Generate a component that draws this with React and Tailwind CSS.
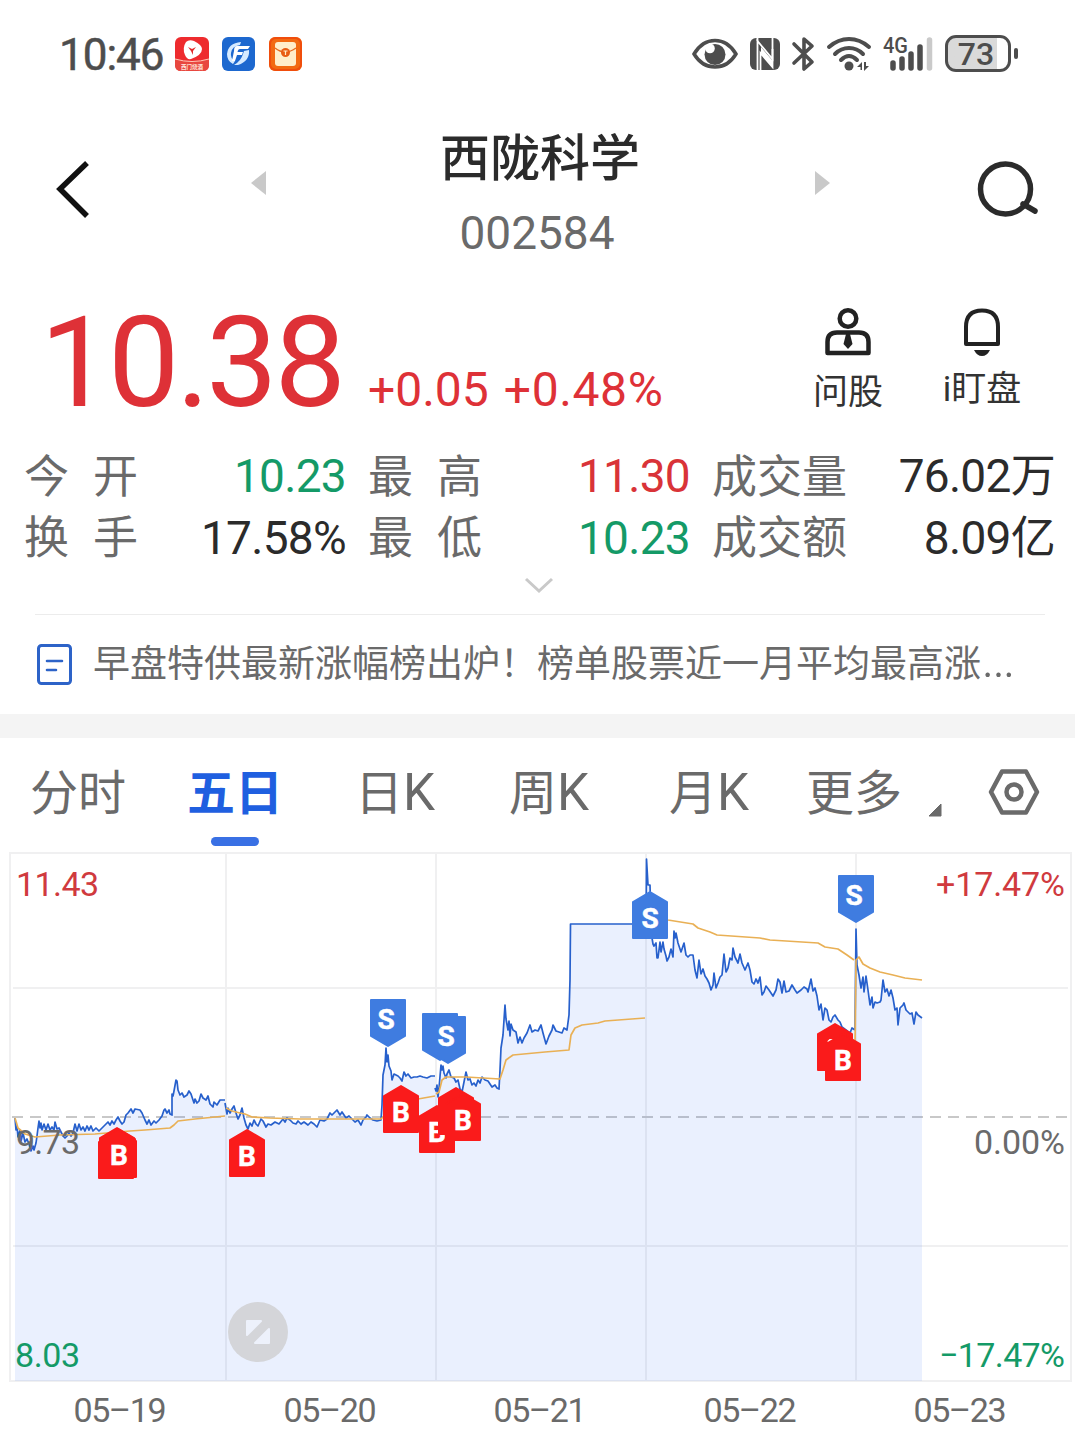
import React from 'react';
import clsx from 'clsx';

const stats = [
  { label: '今开', value: '10.23', color: 'text-[#149a67]' },
  { label: '最高', value: '11.30', color: 'text-[#d93338]' },
  { label: '成交量', value: '76.02', unit: '万', color: 'text-[#2b2b2b]' },
  { label: '换手', value: '17.58%', color: 'text-[#2b2b2b]' },
  { label: '最低', value: '10.23', color: 'text-[#149a67]' },
  { label: '成交额', value: '8.09', unit: '亿', color: 'text-[#2b2b2b]' },
];

const tabs = [
  { name: '分时', width: 'w-[157px]' },
  { name: '五日', width: 'w-[168px]', active: true },
  { name: '日K', width: 'w-[154px]' },
  { name: '周K', width: 'w-[160px]' },
  { name: '月K', width: 'w-[137px]' },
  { name: '更多', width: 'w-[122px]' },
];

// One entry per trading day
const priceDays = [
  '15,1118 16,1130 17,1126 18,1137 20,1130 21,1141 23,1133 25,1142 27,1139 29,1144 31,1151 33,1146 34,1150 36,1143 37,1136 38,1128 39,1121 40,1128 41,1123 42,1130 44,1124 46,1130 48,1124 50,1130 52,1127 54,1130 55,1122 57,1129 59,1128 61,1132 63,1136 65,1138 67,1136 69,1133 71,1136 73,1133 75,1124 77,1131 79,1124 81,1130 83,1127 85,1131 87,1126 89,1130 91,1126 93,1131 96,1128 99,1131 102,1128 105,1125 108,1122 110,1125 112,1121 114,1124 116,1120 118,1117 120,1121 122,1124 124,1122 126,1115 128,1113 131,1109 133,1113 135,1109 140,1110 142,1113 145,1120 147,1124 149,1120 151,1125 154,1121 156,1123 159,1120 162,1116 164,1110 165,1109 167,1113 169,1110 170,1114 172,1115 172,1094 173,1096 174,1091 176,1080 177,1081 178,1090 180,1095 182,1093 184,1097 187,1095 189,1091 191,1094 194,1103 195,1099 197,1103 199,1101 201,1094 203,1098 206,1100 208,1096 210,1104 213,1107 214,1102 217,1105 220,1100 225,1100',
  '225,1103 227,1114 228,1108 230,1113 232,1109 234,1106 236,1113 238,1119 240,1115 242,1108 244,1118 246,1125 248,1129 250,1123 252,1126 254,1120 256,1124 258,1126 261,1119 263,1121 266,1127 268,1124 271,1125 275,1122 279,1124 283,1119 285,1122 287,1118 290,1120 293,1123 296,1124 298,1121 301,1124 304,1122 308,1125 311,1122 314,1124 317,1127 320,1120 324,1121 327,1119 330,1113 332,1115 335,1112 337,1110 340,1115 342,1112 346,1118 349,1116 352,1119 355,1122 358,1120 361,1125 363,1120 366,1117 367,1115 370,1118 373,1120 377,1121 381,1120 382,1105 383,1075 385,1065 386,1048 387,1062 388,1055 389,1066 391,1071 392,1080 394,1074 396,1075 398,1076 400,1078 402,1081 404,1072 406,1076 408,1074 411,1078 414,1077 417,1077 420,1076 423,1077 427,1078 431,1076 435,1076',
  '435,1088 436,1091 437,1085 438,1097 439,1088 441,1065 442,1070 443,1066 444,1073 446,1078 447,1074 449,1070 451,1077 454,1078 456,1082 458,1080 460,1089 462,1092 464,1082 466,1072 468,1080 470,1079 472,1085 474,1083 476,1086 478,1080 480,1083 482,1077 485,1080 488,1081 490,1084 492,1087 495,1085 497,1088 499,1089 500,1070 501,1048 503,1035 505,1005 506,1019 508,1030 509,1021 510,1036 511,1024 513,1030 516,1032 518,1043 520,1037 522,1043 524,1038 527,1033 530,1025 532,1032 535,1030 538,1031 541,1025 543,1033 546,1044 549,1036 552,1030 553,1025 556,1031 559,1032 562,1033 564,1028 567,1030 569,1015 570,980 570.5,924 646,924',
  '646,939 646.5,859 648,885 650,885 651,920 652,938 653,944 654,946 656,943 657,958 658,958 660,942 661,952 663,942 664,949 666,956 667,961 669,957 671,949 673,957 674,931 675,938 676,933 678,943 681,952 684,943 686,955 688,957 690,955 693,955 695,970 697,978 699,960 701,974 703,969 705,976 707,979 709,983 711,990 713,985 714,973 716,988 718,983 720,977 722,975 724,954 726,972 728,968 730,958 732,960 733,948 735,957 738,963 740,954 742,963 745,970 748,963 750,970 752,982 754,984 756,979 758,983 760,977 762,995 764,992 766,986 769,990 773,996 776,990 778,979 780,982 782,993 784,981 786,992 789,991 792,985 795,990 797,993 801,990 804,987 807,989 808,992 811,979 813,991 815,988 817,996 819,1010 821,1004 823,1020 825,1008 827,1010 829,1020 831,1022 833,1017 835,1015 838,1020 840,1022 842,1027 846,1030 850,1033 852,1028 855,1030',
  '855,1030 856,929 857,965 859,975 861,988 863,977 864,992 866,976 868,990 870,1005 872,997 873,1008 875,1002 877,1003 880,1002 881,1000 883,980 885,992 887,989 889,996 891,990 893,998 895,1010 897,1008 898,1025 900,1008 903,1005 904,1003 906,1010 908,1012 910,1014 912,1013 914,1024 916,1012 918,1015 922,1018',
];

const averageLines = [
  '15,1118 18,1128 25,1134 35,1137 60,1135 95,1134 130,1131 145,1130 170,1128 174,1125 178,1121 195,1119 225,1116',
  '226,1108 232,1111 240,1113 245,1114 252,1117 270,1118 300,1119 381,1119 395,1105 418,1099 435,1096',
  '436,1094 439,1092 442,1080 446,1077 466,1077 500,1079 503,1070 506,1060 513,1055 545,1052 569,1050 571,1035 575,1028 582,1025 598,1023 605,1021 645,1018',
  '647,915 668,920 693,924 698,928 710,932 717,935 760,938 770,940 818,943 825,947 838,949 847,955 854,960',
  '855,1045 856,960 859,957 863,964 870,968 880,972 893,975 905,978 922,980',
];

const markers = [
  { x: 98, y: 1131, type: 'B', bare: true },
  { x: 99, y: 1127, type: 'B', bare: true },
  { x: 101, y: 1130, type: 'B', bare: true },
  { x: 100, y: 1128, type: 'B', dx: 1 },
  { x: 229, y: 1129, type: 'B' },
  { x: 383, y: 1085, type: 'B' },
  { x: 419, y: 1105, type: 'B' },
  { x: 438, y: 1087, type: 'B', bare: true },
  { x: 445, y: 1093, type: 'B' },
  { x: 817, y: 1023, type: 'B', bare: true, peek: true },
  { x: 825, y: 1033, type: 'B' },
  { x: 370, y: 999, type: 'S', down: true, dx: -2 },
  { x: 422, y: 1013, type: 'S', down: true, bare: true },
  { x: 430, y: 1016, type: 'S', down: true, dx: -2 },
  { x: 632, y: 891, type: 'S' },
  { x: 838, y: 875, type: 'S', down: true, dx: -2 },
];

function Marker({ x, y, type, down, bare, peek, dx = 0 }) {
  const color = type === 'B' ? '#fa1b1b' : '#3f7ce0';
  const shape = down ? 'M1 1H35V37L18 47L1 37Z' : 'M18 1L35 11V47H1V11Z';
  return (
    <g transform={`translate(${x} ${y})`}>
      <path d={shape} fill={color} stroke={color} strokeWidth="2" strokeLinejoin="round" />
      {peek && <path d="M11 19L13 17H16" fill="none" stroke="#fff" strokeWidth="2" />}
      {!bare && (
        <text
          x={18 + dx}
          y={down ? 30 : 37}
          textAnchor="middle"
          fontSize="28"
          fontWeight="700"
          fill="#fff"
          stroke="#fff"
          strokeWidth="0.5"
        >
          {type}
        </text>
      )}
    </g>
  );
}

function StatusBar() {
  return (
    <div className="flex h-[107px] items-center pl-[59px] text-[#4d4d4d]">
      <span className="w-[116px] pt-[3px] text-[44px] leading-none tracking-[-1px] [-webkit-text-stroke:0.5px_#4d4d4d]">10:46</span>
      <svg className="mr-[13px]" width="34" height="34" viewBox="0 0 34 34">
        <rect width="34" height="34" rx="6" fill="#ee2b2e" />
        <path d="M0 22Q17 27 34 22V28Q34 34 28 34H6Q0 34 0 28Z" fill="#e8473f" />
        <path d="M0 22Q17 27 34 22" stroke="#ffc9b8" fill="none" />
        <path d="M11 5Q14 2 19 4Q27 8 27 12Q27 18 16 22Q12 23 10 18Q7 11 11 5Z" fill="#fff" />
        <path d="M13 10L17 12L21 10L18 14V18L16 14Z" fill="#e22a2b" />
        <text x="6" y="31.500" fontSize="6" fontWeight="700" fill="#ffe3da" textLength="22" lengthAdjust="spacingAndGlyphs">
          西门烧酒
        </text>
      </svg>
      <svg className="mr-[14px]" width="33" height="34" viewBox="0 0 33 34">
        <rect width="33" height="34" rx="6" fill="#1d68cf" />
        <path d="M19 5Q6 6 5 17Q5 24 11 27L13 24Q8 21 9 16Q10 9 18 8Z" fill="#d5eaff" />
        <path d="M15 9H28L26 12H18Q16 12 15.500 15H21L20 18H15L13 24H10L12 14Q12 9 15 9Z" fill="#fff" />
        <path d="M27 13Q28 24 16 28H12Q19 24 21 17L22 14Z" fill="#d5eaff" />
      </svg>
      <svg width="33" height="34" viewBox="0 0 33 34">
        <rect width="33" height="34" rx="6" fill="#f26a12" />
        <rect x="1" y="1" width="31" height="32" rx="6" fill="none" stroke="#f04d0c" strokeWidth="2" />
        <rect x="6" y="5" width="21" height="24" rx="3" fill="#ffeecb" />
        <path d="M6 11Q16 19 27 11" fill="none" stroke="#e66b20" strokeWidth="1.500" />
        <circle cx="16.500" cy="15.500" r="4.500" fill="#e85c13" />
        <path d="M14.500 14H18.500M16.500 14V18" stroke="#ffeecb" strokeWidth="1.200" />
      </svg>

      <svg className="ml-[390px]" width="46" height="34" viewBox="0 0 46 34">
        <path d="M2 17Q10 3.500 23 3.500T44 17Q36 30 23 30T2 17Z" fill="none" stroke="#4d4d4d" strokeWidth="3.500" />
        <circle cx="23" cy="17.500" r="10.500" fill="#4d4d4d" />
        <circle cx="18" cy="11.500" r="4.800" fill="#fff" />
      </svg>
      <svg className="ml-[11px]" width="32" height="34" viewBox="0 0 32 34">
        <rect x="1" y="1" width="30" height="32" rx="6" fill="#4d4d4d" />
        <path d="M8.500 33V4L23.500 22V1" fill="none" stroke="#fff" strokeWidth="1.800" />
        <path d="M8.500 1V4M23.500 12V30L11.500 16V33" fill="none" stroke="#fff" strokeWidth="1.800" />
        <path d="M12 16L23 29V23L12 10Z" fill="#fff" />
      </svg>
      <svg className="ml-[10px]" width="26" height="36" viewBox="0 0 26 36">
        <path d="M3 8L21 26L13 33V3L21 10L3 27" fill="none" stroke="#4d4d4d" strokeWidth="3.600" strokeLinecap="round" strokeLinejoin="round" />
      </svg>
      <svg className="ml-[9px]" width="46" height="36" viewBox="0 0 46 36">
        <g fill="none" stroke="#4d4d4d" strokeWidth="4" strokeLinecap="round">
          <path d="M3 11Q12 3 23 3T43 11" />
          <path d="M9 18Q15 12 23 12T37 18" />
          <path d="M15 24Q19 20 23 20T31 24" />
        </g>
        <circle cx="23" cy="30" r="4.500" fill="#4d4d4d" />
        <path d="M31 31L36 26V34H34.500V31ZM38 26H40V30H43L38 35Z" fill="#4d4d4d" />
      </svg>
      <svg className="ml-[9px] overflow-visible" width="54" height="36" viewBox="0 0 54 36">
        <text x="2" y="17" fontSize="22" fontWeight="500" fill="#4d4d4d" textLength="25" lengthAdjust="spacingAndGlyphs">
          4G
        </text>
        <g stroke="#4d4d4d" strokeWidth="5.500" strokeLinecap="round">
          <path d="M12 27V32M21 23V32M30 18V32M39 11V32" />
          <path d="M48.500 4V32" stroke="#cacaca" />
        </g>
      </svg>
      <div className="ml-[10px] flex h-[37px] w-[66px] items-center justify-center rounded-[11px] border-3 border-[#4d4d4d] bg-linear-to-r from-[#dadada] from-82% to-white to-82%">
        <span className="-ml-1 text-[32px] leading-none font-medium">73</span>
      </div>
      <div className="ml-[3px] h-[11px] w-1 rounded-full bg-[#4d4d4d]" />
    </div>
  );
}

function Header() {
  return (
    <header className="flex h-[163px] pt-5">
      <svg className="mt-[31px] ml-[55px]" width="40" height="62" viewBox="0 0 40 62">
        <path d="M32 5L5 31L32 58" fill="none" stroke="#111" strokeWidth="5.500" />
      </svg>
      <svg className="mt-[44px] ml-[156px]" width="16" height="24" viewBox="0 0 16 24">
        <path d="M0 12L15 0V24Z" fill="#c9c9c9" />
      </svg>
      <div className="flex w-[547px] flex-col items-center pr-[1px]">
        <h1 className="h-[70px] text-[50px] leading-[65px] font-medium text-[#2b2b2b]">西陇科学</h1>
        <span className="mr-[6px] text-[46px] leading-[74px] text-[#6a6a6a]">002584</span>
      </div>
      <svg className="mt-[44px]" width="16" height="24" viewBox="0 0 16 24">
        <path d="M16 12L1 0V24Z" fill="#c9c9c9" />
      </svg>
      <svg className="mt-[32px] ml-[147px]" width="64" height="60" viewBox="0 0 64 60">
        <circle cx="28.500" cy="30" r="25" fill="none" stroke="#2b2b2b" strokeWidth="5.500" />
        <path d="M46 45L58 52" stroke="#2b2b2b" strokeWidth="5.500" strokeLinecap="round" />
      </svg>
    </header>
  );
}

function Quote() {
  return (
    <section className="flex h-[175px]">
      <div className="flex w-[789px] items-baseline pl-[40px] text-[#de3137]">
        <span className="w-[328px] text-[127px] leading-[185px] tracking-[-3.300px]">10.38</span>
        <span className="text-[48px]">+0.05</span>
        <span className="ml-[15px] text-[48px] tracking-[0.600px]">+0.48%</span>
      </div>
      <div className="flex w-[118px] flex-col items-center pt-[37px]">
        <svg width="48" height="50" viewBox="0 0 48 50">
          <g fill="none" stroke="#222" strokeWidth="4.500">
            <circle cx="24" cy="11.500" r="8.300" />
            <path d="M3.500 46V35Q3.500 25.500 13 25.500H35Q44.500 25.500 44.500 35V46Z" strokeLinejoin="round" />
          </g>
          <path d="M22 27H26L28.500 37L24 42L19.500 37Z" fill="#222" />
        </svg>
        <span className="mt-[11px] text-[35px] leading-[50px] text-[#333]">问股</span>
      </div>
      <div className="ml-[18px] flex w-[114px] flex-col items-center pt-[37px]">
        <svg width="42" height="50" viewBox="0 0 42 50">
          <path d="M5 37V20Q5 3.500 21 3.500T37 20V37Z" fill="none" stroke="#222" strokeWidth="4" strokeLinejoin="round" />
          <path d="M13 43H29Q26 49 21 49T13 43Z" fill="#222" />
        </svg>
        <span className="mt-[8px] text-[35px] leading-[50px] text-[#333]">i盯盘</span>
      </div>
    </section>
  );
}

function Stats() {
  return (
    <section className="grid h-[123px] grid-cols-[322px_322px_343px] gap-x-[22px] pl-6">
      {stats.map((s, i) => (
        <div key={i} className="flex h-[61px] items-center justify-between whitespace-nowrap">
          <span className={clsx('pt-[3px] text-[45px] leading-[61px] text-[#6a6a6a]', s.label.length === 2 && 'tracking-[24px]')}>
            {s.label}
          </span>
          <span className={clsx('pt-[2px] text-[46px] leading-[61px] tracking-[-0.700px]', s.color)}>
            {s.value}
            {s.unit && <span className="text-[45px] leading-none">{s.unit}</span>}
          </span>
        </div>
      ))}
    </section>
  );
}

function News() {
  return (
    <section className="mr-[30px] ml-[35px] flex h-[100px] items-center border-t border-[#ececec]">
      <svg className="ml-[2px] shrink-0" width="36" height="42" viewBox="0 0 36 42">
        <rect x="1.500" y="1.500" width="32" height="38" rx="3" fill="none" stroke="#2d63c8" strokeWidth="3" />
        <path d="M10 17H25M10 26H19" stroke="#2d63c8" strokeWidth="2.600" strokeLinecap="round" />
      </svg>
      <span className="-mt-2 ml-5 text-[37px] leading-[50px] whitespace-nowrap text-[#6a6a6a]">
        早盘特供最新涨幅榜出炉！榜单股票近一月平均最高涨
        <span className="text-[54px] leading-none font-light">…</span>
      </span>
    </section>
  );
}

function Tabs() {
  return (
    <nav className="flex h-[112px] pl-[30px]">
      {tabs.map((tab) => (
        <div key={tab.name} className={tab.width}>
          <div className="flex w-fit flex-col items-center">
            <span
              className={clsx(
                'h-[99px] text-[48px] leading-[111px]',
                tab.active ? 'font-bold text-[#1f5fe0]' : 'text-[#6a6a6a]'
              )}
            >
              {tab.name.replace('K', '')}
              {tab.name.endsWith('K') && <span className="text-[51px] leading-none">K</span>}
            </span>
            {tab.active && <div className="h-[9px] w-12 rounded-full bg-[#3970e4]" />}
          </div>
        </div>
      ))}
      <svg className="mt-[65px]" width="14" height="14" viewBox="0 0 14 14">
        <path d="M1 13L13 1V13Z" fill="#6a6a6a" stroke="#6a6a6a" strokeLinejoin="round" />
      </svg>
      <svg className="mt-[30px] ml-[46px]" width="52" height="48" viewBox="0 0 52 48">
        <path d="M14 3.500H38L49 24L38 44.500H14L3 24Z" fill="none" stroke="#6a6a6a" strokeWidth="4.500" strokeLinejoin="round" />
        <circle cx="26" cy="24" r="7.500" fill="none" stroke="#6a6a6a" strokeWidth="4.500" />
      </svg>
    </nav>
  );
}

function Chart() {
  return (
    <svg className="block" width="1075" height="581" viewBox="0 850 1075 581">
      <g fill="none" stroke="#f0f0f1" strokeWidth="2">
        <rect x="10" y="853" width="1061" height="528" />
        <path d="M13 988H1068M13 1246H1068M226 853V1381M436 853V1381M646 853V1381M856 853V1381" />
      </g>
      <path d="M12 1117H1070" stroke="#c8c8c8" strokeWidth="2" strokeDasharray="11 7" />
      <path
        d={`M15 1381L${priceDays.join(' ')} L922 1381Z`}
        fill="#2d68fa"
        fillOpacity="0.1"
      />
      <g fill="none" strokeWidth="1.700" strokeLinejoin="round">
        {priceDays.map((points, i) => (
          <polyline key={i} points={points} stroke="#2760cc" />
        ))}
        {averageLines.map((points, i) => (
          <polyline key={i} points={points} stroke="#e9b055" />
        ))}
      </g>
      <text x="16" y="1154" fontSize="34" fill="#6a6a6a" textLength="64">9.73</text>
      {markers.map((m, i) => (
        <Marker key={i} {...m} />
      ))}

      <g fontSize="34">
        <text x="16" y="896" fill="#d03a3e" textLength="83">11.43</text>
        <text x="1065" y="896" fill="#d03a3e" textAnchor="end" textLength="129">+17.47%</text>
        <text x="1065" y="1154" fill="#6a6a6a" textAnchor="end" textLength="91">0.00%</text>
        <text x="15" y="1367" fill="#149a67" textLength="65">8.03</text>
        <text x="1065" y="1367" fill="#149a67" textAnchor="end" textLength="126">−17.47%</text>
      </g>
      <g fontSize="34" fill="#6a6a6a" textAnchor="middle">
        {['05–19', '05–20', '05–21', '05–22', '05–23'].map((d, i) => (
          <text key={d} x={120 + i * 210} y="1422" textLength="93">{d}</text>
        ))}
      </g>

      {/* fullscreen button */}
      <circle cx="258" cy="1332" r="30" fill="#d4d5d9" />
      <path d="M247 1321H261L247 1335ZM269 1329V1343H255Z" fill="#edf1fb" stroke="#edf1fb" strokeWidth="2" strokeLinejoin="round" />
    </svg>
  );
}

export default function App() {
  return (
    <div className="h-[1431px] w-[1075px] overflow-hidden bg-white font-[Roboto,'Noto_Sans_CJK_SC',sans-serif]">
      <StatusBar />
      <Header />
      <Quote />
      <Stats />
      <div className="flex h-[46px] justify-center pt-[8px] pl-[3px]">
        <svg width="30" height="18" viewBox="0 0 30 18">
          <path d="M2 3L15 15L28 3" fill="none" stroke="#c9c9c9" strokeWidth="3" />
        </svg>
      </div>
      <News />
      <div className="h-6 bg-[#f4f4f4]" />
      <Tabs />
      <Chart />
    </div>
  );
}
